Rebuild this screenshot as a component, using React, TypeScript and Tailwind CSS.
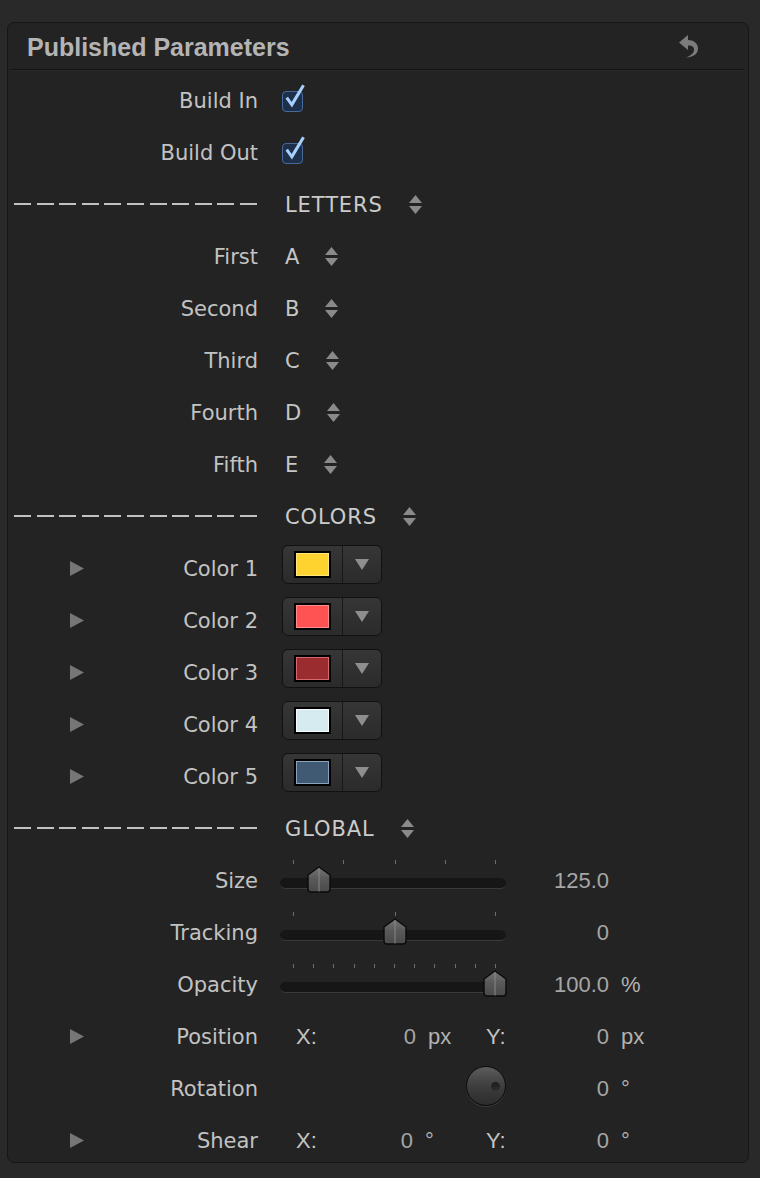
import type { ReactNode } from 'react';

const labelFont = "font-['DejaVu_Sans',sans-serif]";
const valueFont = "font-['Liberation_Sans',Arial,sans-serif]";

const Triangle = () => (
  <svg width="14" height="15" viewBox="0 0 14 15" className="shrink-0">
    <path d="M0 0L14 7.5L0 15Z" fill="#767676" />
  </svg>
);

const Stepper = () => (
  <svg width="13" height="19" viewBox="0 0 13 19" className="ml-[26px] shrink-0">
    <path d="M6.5 0L13 8H0Z" fill="#8a8a8a" />
    <path d="M0 11H13L6.5 19Z" fill="#8a8a8a" />
  </svg>
);

interface RowProps {
  label?: string;
  tri?: boolean;
  dashed?: boolean;
  children?: ReactNode;
}

const Row = ({ label, tri, dashed, children }: RowProps) => (
  <div className="flex h-[52px] shrink-0 items-center">
    <div className="flex w-[250px] items-center">
      {dashed ? (
        <div className="ml-[6px] flex w-[243px] justify-between">
          {Array.from({ length: 11 }).map((_, i) => (
            <div key={i} className="h-[2px] w-[17px] bg-[#c2c2c2]" />
          ))}
        </div>
      ) : (
        <>
          <div className="ml-[62px] w-[14px]">{tri && <Triangle />}</div>
          <div className="flex-1 pt-[4px] text-right text-[21px] text-[#c2c2c2]">{label}</div>
        </>
      )}
    </div>
    <div className="ml-[24px] flex items-center">{children}</div>
  </div>
);

const Check = () => (
  <div className="relative mt-[2px] h-[21px] w-[21px] rounded-[4px] border-[1.5px] border-[#46699a] bg-[#1e3049]">
    <svg width="24" height="27" viewBox="0 0 24 27" className="absolute -top-[9px] -left-[1.5px]">
      <path d="M3.5 15.5L6 13.8L9.6 19L20.2 1.5L22.8 3L10 24.5Z" fill="#a6cffd" />
    </svg>
  </div>
);

const Section = ({ title }: { title: string }) => (
  <Row dashed>
    <span className="pt-[4px] pl-[3px] text-[21px] tracking-[0.9px] text-[#cbcbcb]">{title}</span>
    <Stepper />
  </Row>
);

const Letter = ({ label, value }: { label: string; value: string }) => (
  <Row label={label}>
    <span className="pt-[4px] pl-[3px] text-[21px] text-[#c6c6c6]">{value}</span>
    <Stepper />
  </Row>
);

const ColorWell = ({ color, ring }: { color: string; ring: string }) => (
  <div className="mb-[8px] flex h-[39px] w-[100px] rounded-[6px] border border-[#111] bg-linear-to-b from-[#363636] to-[#2b2b2b]">
    <div className="flex w-[60px] items-center justify-center border-r border-[#181818]">
      <div className="h-[27px] w-[37px] border-2 border-black">
        <div className={`h-full w-full border ${ring}`} style={{ backgroundColor: color }} />
      </div>
    </div>
    <div className="flex flex-1 items-center justify-center">
      <svg width="14" height="11" viewBox="0 0 14 11">
        <path d="M0 0H14L7 11Z" fill="#8e8e8e" />
      </svg>
    </div>
  </div>
);

const Thumb = ({ left }: { left: number }) => (
  <svg
    width="24"
    height="27"
    viewBox="0 0 24 27"
    className="absolute top-[12px]"
    style={{ left }}
  >
    <defs>
      <linearGradient id="thumb" x1="0" y1="0" x2="0" y2="1">
        <stop offset="0" stopColor="#767676" />
        <stop offset="0.45" stopColor="#5a5a5a" />
        <stop offset="1" stopColor="#4a4a4a" />
      </linearGradient>
    </defs>
    <path
      d="M12 1L23 9V23Q23 26 20 26H4Q1 26 1 23V9Z"
      fill="url(#thumb)"
      stroke="#0b0b0b"
      strokeWidth="1.4"
    />
    <path d="M12 2V25.5" stroke="#878787" strokeWidth="1" />
  </svg>
);

const Slider = ({ ticks, thumb }: { ticks: number[]; thumb: number }) => (
  <div className="relative -ml-[2px] h-[52px] w-[226px]">
    {ticks.map((t) => (
      <div key={t} className="absolute top-[6px] h-[4px] w-px bg-[#6c6c6c]" style={{ left: t }} />
    ))}
    <div className="absolute top-[24px] h-[11px] w-full rounded-full border-b border-[#3a3a3a] bg-[#161616]" />
    <Thumb left={thumb} />
  </div>
);

const Value = ({ w, children }: { w: string; children: ReactNode }) => (
  <div className={`${w} ${valueFont} text-right text-[22px] text-[#a6a6a6]`}>{children}</div>
);

const Unit = ({ children, w = '' }: { children: ReactNode; w?: string }) => (
  <div className={`${w} ${valueFont} ml-[12px] text-[22px] text-[#b2b2b2]`}>{children}</div>
);

const Axis = ({ children }: { children: ReactNode }) => (
  <div className={`w-[40px] ${valueFont} text-[22px] text-[#c4c4c4]`}>{children}</div>
);

const opacityTicks = Array.from({ length: 11 }).map((_, i) => 13 + Math.round(i * 20.2));

const App = () => (
  <div className={`min-h-[1178px] bg-[#292929] pt-[22px] pl-[7px] ${labelFont}`}>
    <div className="h-[1141px] w-[742px] overflow-hidden rounded-[7px] border border-[#161616] bg-[#232323]">
      <div className="flex h-[46px] items-center justify-between pr-[49px] pl-[19px]">
        <span className={`${valueFont} pt-[3px] text-[25px] font-bold text-[#b4b4b4]`}>Published Parameters</span>
        <svg width="20" height="23" viewBox="0 0 20 23">
          <path
            d="M9 0L0 7.5L9 15V10.5C13.5 10.5 15.5 12.5 15 15.5C14.5 18.5 11 21 7 22.5C14 22.5 19 19 19 13.5C19 8 14.5 5 9 5Z"
            fill="#7b7b7b"
          />
        </svg>
      </div>
      <div className="mx-[4px] h-px bg-[#111]" />
      <div className="mx-[4px] h-px bg-[#2a2a2a]" />
      <div className="flex flex-col pt-[3px]">
        <Row label="Build In">
          <Check />
        </Row>
        <Row label="Build Out">
          <Check />
        </Row>
        <Section title="LETTERS" />
        <Letter label="First" value="A" />
        <Letter label="Second" value="B" />
        <Letter label="Third" value="C" />
        <Letter label="Fourth" value="D" />
        <Letter label="Fifth" value="E" />
        <Section title="COLORS" />
        <Row label="Color 1" tri>
          <ColorWell color="#ffd32f" ring="border-[#ffe57a]" />
        </Row>
        <Row label="Color 2" tri>
          <ColorWell color="#ff5252" ring="border-[#ff8c8c]" />
        </Row>
        <Row label="Color 3" tri>
          <ColorWell color="#9a2c30" ring="border-[#d46a6e]" />
        </Row>
        <Row label="Color 4" tri>
          <ColorWell color="#d5ebef" ring="border-[#f4fcfd]" />
        </Row>
        <Row label="Color 5" tri>
          <ColorWell color="#415a74" ring="border-[#8aa2bb]" />
        </Row>
        <Section title="GLOBAL" />
        <Row label="Size">
          <Slider ticks={[13, 63, 115, 165, 215]} thumb={27} />
          <Value w="w-[103px]">125.0</Value>
        </Row>
        <Row label="Tracking">
          <Slider ticks={[13, 115, 215]} thumb={103} />
          <Value w="w-[103px]">0</Value>
        </Row>
        <Row label="Opacity">
          <Slider ticks={opacityTicks} thumb={203} />
          <Value w="w-[103px]">100.0</Value>
          <Unit>%</Unit>
        </Row>
        <Row label="Position" tri>
          <div className="ml-[14px]" />
          <Axis>X:</Axis>
          <Value w="w-[80px]">0</Value>
          <Unit w="w-[58px]">px</Unit>
          <Axis>Y:</Axis>
          <Value w="w-[83px]">0</Value>
          <Unit>px</Unit>
        </Row>
        <Row label="Rotation">
          <div className="w-[184px]" />
          <div className="relative mb-[4px] h-[40px] w-[40px] rounded-full border border-[#0c0c0c] bg-linear-to-b from-[#5c5c5c] via-[#3e3e3e] to-[#2c2c2c] shadow-[0_1px_0_#3a3a3a]">
            <div className="absolute top-[15px] left-[24px] h-[9px] w-[9px] rounded-full bg-linear-to-b from-[#1c1c1c] to-[#2e2e2e]" />
          </div>
          <Value w="w-[103px]">0</Value>
          <Unit>°</Unit>
        </Row>
        <Row label="Shear" tri>
          <div className="ml-[14px]" />
          <Axis>X:</Axis>
          <Value w="w-[77px]">0</Value>
          <Unit w="w-[61px]">°</Unit>
          <Axis>Y:</Axis>
          <Value w="w-[83px]">0</Value>
          <Unit>°</Unit>
        </Row>
      </div>
    </div>
  </div>
);

export default App;
